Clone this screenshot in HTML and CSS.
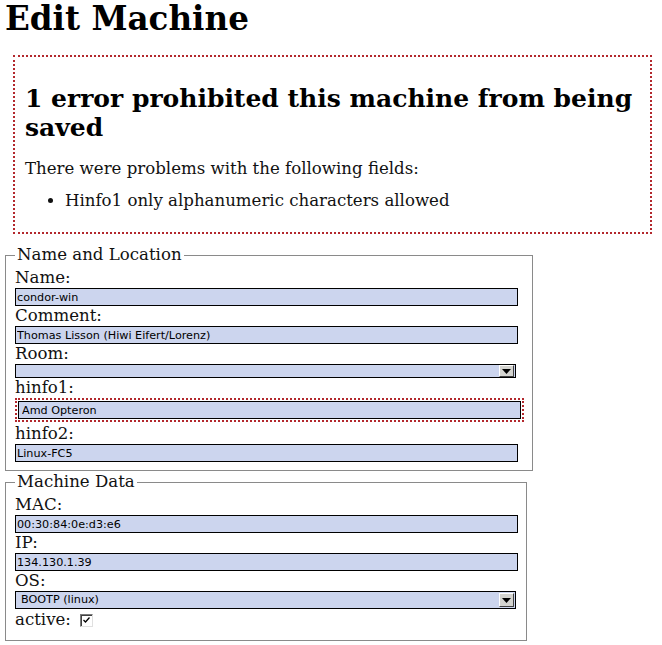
FILE: index.html
```html
<!DOCTYPE html>
<html>
<head>
<meta charset="utf-8">
<link rel="stylesheet" href="styles.css">
</head>
<body>
<h1 class="title">Edit Machine</h1>
<div class="error-box">
  <h2 class="error-title">1 error prohibited this machine from being saved</h2>
  <p class="error-intro">There were problems with the following fields:</p>
  <ul class="error-list">
    <li>Hinfo1 only alphanumeric characters allowed</li>
  </ul>
</div>
<form class="machine-form">
  <fieldset class="group group-location">
    <legend class="group-legend">Name and Location</legend>
    <label class="field-label">Name:</label>
    <input class="field-input" type="text" value="condor-win">
    <label class="field-label">Comment:</label>
    <input class="field-input" type="text" value="Thomas Lisson (Hiwi Eifert/Lorenz)">
    <label class="field-label">Room:</label>
    <div class="select-wrap select-empty">
      <span class="select-text"></span>
      <span class="select-btn"><svg width="9" height="5" viewBox="0 0 9 5"><path d="M0 0h9L4.5 5z" fill="#000"/></svg></span>
    </div>
    <label class="field-label">hinfo1:</label>
    <div class="field-error">
      <input class="field-input field-input-err" type="text" value="Amd Opteron">
    </div>
    <label class="field-label">hinfo2:</label>
    <input class="field-input" type="text" value="Linux-FC5">
  </fieldset>
  <fieldset class="group group-data">
    <legend class="group-legend">Machine Data</legend>
    <label class="field-label">MAC:</label>
    <input class="field-input" type="text" value="00:30:84:0e:d3:e6">
    <label class="field-label">IP:</label>
    <input class="field-input" type="text" value="134.130.1.39">
    <label class="field-label">OS:</label>
    <div class="select-wrap select-os">
      <span class="select-text">BOOTP (linux)</span>
      <span class="select-btn"><svg width="9" height="5" viewBox="0 0 9 5"><path d="M0 0h9L4.5 5z" fill="#000"/></svg></span>
    </div>
    <div class="active-row">
      <span class="field-label-inline">active:</span>
      <span class="checkbox"><svg width="9" height="8" viewBox="0 0 9 8"><path d="M1.5 4l2 2L7.5 1.5" fill="none" stroke="#000" stroke-width="1.3"/></svg></span>
    </div>
  </fieldset>
</form>
</body>
</html>
```
FILE: styles.css
```css
html, body {
  margin: 0;
  padding: 0;
  background: #fff;
}
body {
  padding: 0 5px;
  font-family: "DejaVu Serif", serif;
  color: #000;
}
.title {
  font-family: "DejaVu Serif", serif;
  font-weight: bold;
  font-size: 32.6px;
  line-height: 37px;
  margin: 0;
}
.error-box {
  margin: 18px 5px 12px 8px;
  border: 2px dotted #b3282d;
  padding: 10px 10px 10px 10px;
}
.error-title {
  font-size: 25px;
  font-weight: bold;
  line-height: 29px;
  margin: 17px 0 16px 0;
}
.error-intro {
  font-size: 16.6px;
  color: #111;
  margin: 0 0 10px 0;
  line-height: 22px;
}
.error-list {
  margin: 0 0 10px 0;
  padding-left: 40px;
  font-size: 16.6px;
  color: #111;
  line-height: 22px;
}
.machine-form {
  margin: 0;
}
.group {
  margin: 0;
  border: 1px solid #8a8a8a;
  padding: 4px 8px 8px 9px;
  display: flex;
  flex-direction: column;
  align-items: flex-start;
}
.group-location {
  width: 509px;
}
.group-data {
  width: 502px;
  margin-top: 2px;
  padding-bottom: 10px;
}
.group-legend {
  font-size: 16.6px;
  color: #111;
  padding: 0 2px;
  margin-left: 0;
  line-height: 18px;
}
.field-label, .field-label-inline {
  font-size: 16.6px;
  color: #111;
  line-height: 20px;
  display: block;
}
.field-input {
  display: block;
  box-sizing: border-box;
  width: 503px;
  height: 18px;
  margin: 0;
  padding: 0 1px;
  border: 1px solid #000;
  background: #ccd5ee;
  font-family: "DejaVu Sans", sans-serif;
  font-size: 11.2px;
  color: #000;
  outline: none;
}
.field-error {
  border: 2px dotted #b3282d;
  padding: 1px;
  margin: 0 0 2px 0;
}
.field-input-err {
  padding-left: 3px;
}
.select-wrap {
  position: relative;
  box-sizing: border-box;
  width: 501px;
  border: 1px solid #000;
  background: #ccd5ee;
  font-family: "DejaVu Sans", sans-serif;
  font-size: 11.2px;
  display: flex;
  align-items: center;
}
.select-empty {
  height: 14px;
}
.select-os {
  height: 18px;
}
.select-text {
  padding-left: 5px;
  line-height: 16px;
}
.select-btn {
  position: absolute;
  right: 1px;
  top: 0;
  bottom: 0;
  margin: auto 0;
  width: 15px;
  height: 12px;
  box-sizing: border-box;
  background: #d4d4d0;
  border: 1px solid;
  border-color: #fff #404040 #404040 #fff;
  display: flex;
  align-items: center;
  justify-content: center;
}
.select-os .select-btn {
  height: 14px;
  width: 15px;
}
.active-row {
  display: flex;
  align-items: center;
  gap: 9px;
  margin-top: 1px;
}
.checkbox {
  width: 13px;
  height: 13px;
  box-sizing: border-box;
  border: 1px solid;
  border-color: #7a7a7a #e0e0e0 #e0e0e0 #7a7a7a;
  box-shadow: inset 1px 1px 0 #404040;
  background: #fff;
  display: flex;
  align-items: center;
  justify-content: center;
}
```
